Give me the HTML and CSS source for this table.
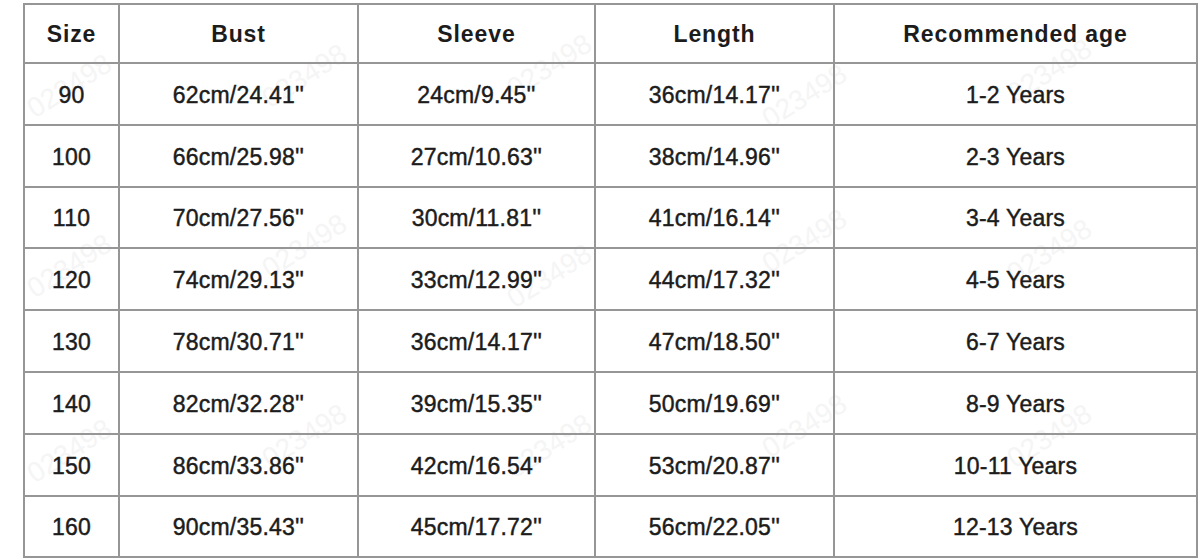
FILE: index.html
```html
<!DOCTYPE html>
<html>
<head>
<meta charset="utf-8">
<link rel="stylesheet" href="styles.css">
</head>
<body>
<div class="sheet">
  <table class="sizes">
    <colgroup>
      <col class="c-size"><col class="c-bust"><col class="c-sleeve"><col class="c-length"><col class="c-age">
    </colgroup>
    <thead>
      <tr><th>Size</th><th>Bust</th><th>Sleeve</th><th>Length</th><th>Recommended age</th></tr>
    </thead>
    <tbody>
      <tr><td>90</td><td>62cm/24.41''</td><td>24cm/9.45''</td><td>36cm/14.17''</td><td>1-2 Years</td></tr>
      <tr><td>100</td><td>66cm/25.98''</td><td>27cm/10.63''</td><td>38cm/14.96''</td><td>2-3 Years</td></tr>
      <tr><td>110</td><td>70cm/27.56''</td><td>30cm/11.81''</td><td>41cm/16.14''</td><td>3-4 Years</td></tr>
      <tr><td>120</td><td>74cm/29.13''</td><td>33cm/12.99''</td><td>44cm/17.32''</td><td>4-5 Years</td></tr>
      <tr><td>130</td><td>78cm/30.71''</td><td>36cm/14.17''</td><td>47cm/18.50''</td><td>6-7 Years</td></tr>
      <tr><td>140</td><td>82cm/32.28''</td><td>39cm/15.35''</td><td>50cm/19.69''</td><td>8-9 Years</td></tr>
      <tr><td>150</td><td>86cm/33.86''</td><td>42cm/16.54''</td><td>53cm/20.87''</td><td>10-11 Years</td></tr>
      <tr><td>160</td><td>90cm/35.43''</td><td>45cm/17.72''</td><td>56cm/22.05''</td><td>12-13 Years</td></tr>
    </tbody>
  </table>
  <div class="wm" aria-hidden="true">
    <span class="mark m1">023498</span>
    <span class="mark m2">023498</span>
    <span class="mark m3">023498</span>
    <span class="mark m4">023498</span>
    <span class="mark m5">023498</span>
    <span class="mark m6">023498</span>
    <span class="mark m7">023498</span>
    <span class="mark m8">023498</span>
    <span class="mark m9">023498</span>
    <span class="mark m10">023498</span>
    <span class="mark m11">023498</span>
    <span class="mark m12">023498</span>
    <span class="mark m13">023498</span>
    <span class="mark m14">023498</span>
    <span class="mark m15">023498</span>
  </div>
</div>
</body>
</html>
```
FILE: styles.css
```css
html, body {
  margin: 0;
  padding: 0;
  background: #ffffff;
}

.sheet {
  position: relative;
  width: 1200px;
  height: 560px;
  overflow: hidden;
  padding: 3px 0 0 23px;
  box-sizing: border-box;
}

.sizes {
  border-collapse: collapse;
  table-layout: fixed;
  width: 1173px;
  font-family: "Liberation Sans", Arial, sans-serif;
  color: #1c1c1c;
  position: relative;
  z-index: 1;
}

.c-size { width: 95px; }
.c-bust { width: 239px; }
.c-sleeve { width: 237px; }
.c-length { width: 239px; }
.c-age { width: 363px; }

.sizes th,
.sizes td {
  border: 2px solid #969696;
  height: 59.7px;
  padding: 0;
  text-align: center;
  vertical-align: middle;
  font-size: 23px;
  line-height: 26px;
}

.sizes th {
  height: 57px;
  font-weight: 700;
  font-size: 23px;
  letter-spacing: 0.9px;
}

.sizes td {
  padding-top: 2px;
  height: 57.8px;
  font-weight: 400;
  -webkit-text-stroke: 0.45px #1c1c1c;
  letter-spacing: 0.2px;
}

.wm {
  position: absolute;
  inset: 0;
  z-index: 0;
  pointer-events: none;
}

.mark {
  position: absolute;
  font-family: "Liberation Sans", Arial, sans-serif;
  font-size: 28px;
  font-weight: 400;
  color: #f5f5f5;
  transform: rotate(-32deg);
  transform-origin: left center;
  white-space: nowrap;
}

.m1 { left: 30px; top: 95px; }
.m2 { left: 265px; top: 85px; }
.m3 { left: 510px; top: 75px; }
.m4 { left: 765px; top: 105px; }
.m5 { left: 1010px; top: 80px; }
.m6 { left: 30px; top: 275px; }
.m7 { left: 265px; top: 255px; }
.m8 { left: 510px; top: 285px; }
.m9 { left: 765px; top: 250px; }
.m10 { left: 1010px; top: 260px; }
.m11 { left: 30px; top: 460px; }
.m12 { left: 265px; top: 445px; }
.m13 { left: 510px; top: 455px; }
.m14 { left: 765px; top: 435px; }
.m15 { left: 1010px; top: 445px; }
```
